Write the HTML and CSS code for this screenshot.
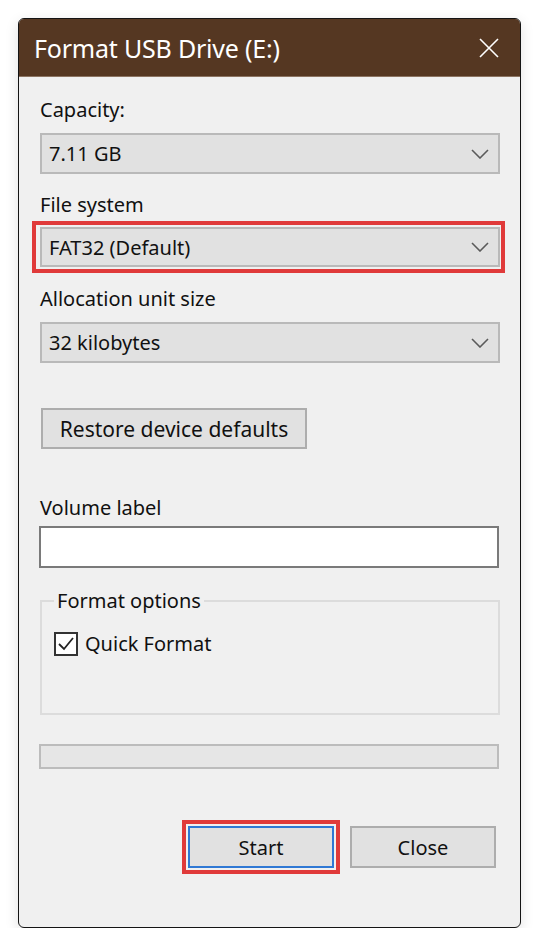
FILE: index.html
```html
<!DOCTYPE html>
<html lang="en">
<head>
    <meta charset="UTF-8">
    <meta name="viewport" content="width=device-width, initial-scale=1.0">
    <title>Format USB Drive (E:)</title>
    <link rel="stylesheet" href="styles.css">
</head>
<body>

    <div class="window">
        <div class="titlebar">
            <span class="title">Format USB Drive (E:)</span>
            <svg class="close-x" width="20" height="20" viewBox="0 0 20 20">
                <path d="M1 1 L19 19 M19 1 L1 19" stroke="#fff" stroke-width="1.6" fill="none"/>
            </svg>
        </div>

        <div class="content">
            <div class="label first">Capacity:</div>
            <div class="combo">
                <span>7.11 GB</span>
                <svg class="chevron" width="18" height="10" viewBox="0 0 18 10"><path d="M1 1 L9 9 L17 1" stroke="#5a5a5a" stroke-width="1.6" fill="none"/></svg>
            </div>

            <div class="label">File system</div>
            <div class="highlight">
                <div class="combo">
                    <span>FAT32 (Default)</span>
                    <svg class="chevron" width="18" height="10" viewBox="0 0 18 10"><path d="M1 1 L9 9 L17 1" stroke="#5a5a5a" stroke-width="1.6" fill="none"/></svg>
                </div>
            </div>

            <div class="label alloc">Allocation unit size</div>
            <div class="combo">
                <span>32 kilobytes</span>
                <svg class="chevron" width="18" height="10" viewBox="0 0 18 10"><path d="M1 1 L9 9 L17 1" stroke="#5a5a5a" stroke-width="1.6" fill="none"/></svg>
            </div>

            <button class="btn restore">Restore device defaults</button>

            <div class="label volume">Volume label</div>
            <input type="text" class="textbox">

            <fieldset class="group">
                <legend>Format options</legend>
                <label class="check">
                    <span class="box">
                        <svg width="18" height="16" viewBox="0 0 18 16"><path d="M2 8 L7 13 L16 2" stroke="#222" stroke-width="1.8" fill="none"/></svg>
                    </span>
                    Quick Format
                </label>
            </fieldset>

            <div class="progress"></div>

            <div class="actions">
                <div class="highlight start-wrap">
                    <button class="btn start">Start</button>
                </div>
                <button class="btn close">Close</button>
            </div>
        </div>
    </div>

</body>
</html>
```

FILE: styles.css
```css
body {
    margin: 0;
    background-color: #fff;
    font-family: 'Noto Sans', 'Open Sans', sans-serif;
    color: #111;
}

.window {
    margin: 18px 0 0 18px;
    width: 503px;
    height: 910px;
    box-sizing: border-box;
    border: 1px solid #141414;
    border-radius: 6px;
    overflow: hidden;
    background-color: #f0f0f0;
    box-shadow: 0 4px 14px rgba(0, 0, 0, 0.12);
}

.titlebar {
    height: 57px;
    background-color: #553722;
    border-bottom: 1px solid #8c7462;
    display: flex;
    align-items: center;
    justify-content: space-between;
    padding: 0 21px 0 15px;
}

.title {
    color: #fff;
    font-size: 25px;
    letter-spacing: -0.2px;
}

.close-x {
    display: block;
}

.content {
    display: flex;
    flex-direction: column;
    align-items: stretch;
    padding: 0 20px 0 21px;
}

.label {
    font-size: 20px;
    line-height: 24px;
    height: 24px;
    margin-top: 19px;
}

.label.first {
    margin-top: 21px;
}

.label.alloc {
    margin-top: 14px;
}

.label.volume {
    margin-top: 47px;
}

.combo {
    height: 41px;
    margin-top: 11px;
    box-sizing: border-box;
    border: 2px solid #b9b9b9;
    background-color: #e1e1e1;
    display: flex;
    align-items: center;
    justify-content: space-between;
    padding: 0 9px 0 7px;
    font-size: 20px;
}

.highlight {
    border: 4px solid #e03a3a;
    margin: 4px -5px 0 -8px;
    padding: 2px 1px 2px 4px;
}

.highlight .combo {
    margin-top: 0;
    height: 40px;
}

.chevron {
    display: block;
}

.btn {
    font-family: inherit;
    font-size: 20px;
    color: #111;
    background-color: #e1e1e1;
    border: 2px solid #adadad;
    box-sizing: border-box;
    padding: 0;
}

.restore {
    align-self: flex-start;
    margin: 45px 0 0 1px;
    width: 266px;
    height: 41px;
    font-size: 21px;
}

.textbox {
    margin-top: 6px;
    height: 42px;
    box-sizing: border-box;
    border: 2px solid #7a7a7a;
    background-color: #fff;
    margin-left: -1px;
    margin-right: 1px;
}

.group {
    margin: 21px 0 0 0;
    padding: 19px 12px 0;
    height: 126px;
    box-sizing: border-box;
    border: 2px solid #dcdcdc;
    min-width: 0;
}

.group legend {
    font-size: 20px;
    line-height: 24px;
    padding: 0 3px;
    margin-left: 0;
}

.check {
    display: flex;
    align-items: center;
    gap: 7px;
    font-size: 20px;
    line-height: 24px;
}

.box {
    width: 24px;
    height: 24px;
    box-sizing: border-box;
    border: 2px solid #333;
    background-color: #fff;
    display: flex;
    align-items: center;
    justify-content: center;
}

.box svg {
    display: block;
}

.progress {
    margin-top: 29px;
    height: 25px;
    box-sizing: border-box;
    border: 2px solid #bcbcbc;
    background-color: #e6e6e6;
    margin-left: -1px;
    margin-right: 1px;
}

.actions {
    display: flex;
    justify-content: flex-end;
    align-items: center;
    gap: 10px;
    margin-top: 51px;
    padding-right: 4px;
}

.start-wrap {
    margin: 0;
    padding: 2px;
}

.start {
    width: 146px;
    height: 42px;
    border-color: #2f78d4;
}

.close {
    width: 146px;
    height: 42px;
}
```
